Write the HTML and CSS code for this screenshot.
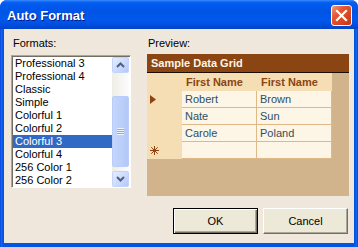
FILE: index.html
```html
<!DOCTYPE html>
<html lang="en">

<head>
    <meta charset="UTF-8">
    <title>Auto Format</title>
    <link rel="stylesheet" href="styles.css">
</head>

<body>
    <div class="window">
        <div class="titlebar">
            <span class="title">Auto Format</span>
            <span class="close-btn">
                <svg width="13" height="13" viewBox="0 0 13 13">
                    <path d="M2 2 L11 11 M11 2 L2 11" stroke="#fff" stroke-width="2.2" stroke-linecap="square" />
                </svg>
            </span>
        </div>

        <div class="client">
            <div class="panes">
                <div class="formats">
                    <div class="label">Formats:</div>
                    <div class="listbox">
                        <ul class="items">
                            <li>Professional 3</li>
                            <li>Professional 4</li>
                            <li>Classic</li>
                            <li>Simple</li>
                            <li>Colorful 1</li>
                            <li>Colorful 2</li>
                            <li class="selected">Colorful 3</li>
                            <li>Colorful 4</li>
                            <li>256 Color 1</li>
                            <li>256 Color 2</li>
                        </ul>
                        <div class="scrollbar">
                            <div class="sb-btn">
                                <svg width="9" height="6" viewBox="0 0 9 6"><path d="M1 5 L4.5 1.5 L8 5" fill="none" stroke="#4d6185" stroke-width="2" /></svg>
                            </div>
                            <div class="sb-track">
                                <div class="sb-thumb">
                                    <span class="grip"></span>
                                </div>
                            </div>
                            <div class="sb-btn">
                                <svg width="9" height="6" viewBox="0 0 9 6"><path d="M1 1 L4.5 4.5 L8 1" fill="none" stroke="#4d6185" stroke-width="2" /></svg>
                            </div>
                        </div>
                    </div>
                </div>

                <div class="preview">
                    <div class="label">Preview:</div>
                    <div class="datagrid">
                        <div class="caption">Sample Data Grid</div>
                        <div class="grid">
                            <div class="row-head"></div>
                            <div class="col-head">First Name</div>
                            <div class="col-head">First Name</div>

                            <div class="row-head">
                                <svg width="6" height="9" viewBox="0 0 6 9"><path d="M0 0 L6 4.5 L0 9 Z" fill="#8b4513" /></svg>
                            </div>
                            <div class="cell">Robert</div>
                            <div class="cell">Brown</div>

                            <div class="row-head"></div>
                            <div class="cell">Nate</div>
                            <div class="cell">Sun</div>

                            <div class="row-head"></div>
                            <div class="cell">Carole</div>
                            <div class="cell">Poland</div>

                            <div class="row-head">
                                <svg width="9" height="9" viewBox="0 0 9 9">
                                    <path d="M4.5 0 V9 M0 4.5 H9 M1.3 1.3 L7.7 7.7 M7.7 1.3 L1.3 7.7" stroke="#8b4513" stroke-width="1" />
                                </svg>
                            </div>
                            <div class="cell"></div>
                            <div class="cell"></div>
                        </div>
                    </div>
                </div>
            </div>

            <div class="buttons">
                <button class="btn default">OK</button>
                <button class="btn">Cancel</button>
            </div>
        </div>
    </div>
</body>

</html>
```

FILE: styles.css
```css
body {
    margin: 0;
    font-family: 'Liberation Sans', Arial, sans-serif;
    font-size: 11px;
    color: #000;
}

.window {
    width: 358px;
    height: 247px;
    box-sizing: border-box;
    display: flex;
    flex-direction: column;
    background: linear-gradient(to right, #0831d9 0, #166aee 1px, #0055e5 3px, #0055e5 355px, #166aee 357px, #0831d9 358px);
    border-radius: 7px 7px 0 0;
    overflow: hidden;
}

.titlebar {
    height: 29px;
    flex: none;
    display: flex;
    align-items: center;
    justify-content: space-between;
    padding: 0 6px 0 7px;
    background: linear-gradient(to bottom, #3c8cff 0, #0a62f0 2px, #0058ee 5px, #0055e5 12px, #0058ee 20px, #004bd8 26px, #0043c8 29px);
}

.title {
    color: #fff;
    font-weight: bold;
    font-size: 13px;
    text-shadow: 1px 1px #0a1883;
    margin-top: 1px;
}

.close-btn {
    width: 21px;
    height: 21px;
    box-sizing: border-box;
    border: 1px solid #fff;
    border-radius: 3px;
    background: linear-gradient(135deg, #f39a7c 0, #e5562f 35%, #d2401c 80%, #c03510 100%);
    display: flex;
    align-items: center;
    justify-content: center;
    margin-top: 1px;
}

.client {
    flex: 1;
    margin: 0 4px 4px;
    padding: 8px 5px 9px 7px;
    display: flex;
    flex-direction: column;
    background: repeating-conic-gradient(#f0e8dc 0 25%, #e9ebd7 0 50%) 0 0 / 2px 2px;
}

.panes {
    display: flex;
    gap: 16px;
}

.label {
    height: 13px;
    line-height: 13px;
}

.formats .label {
    margin-left: 2px;
    margin-bottom: 5px;
}

.preview .label {
    margin-left: 1px;
    margin-bottom: 4px;
}

.listbox {
    width: 120px;
    height: 133px;
    box-sizing: border-box;
    display: flex;
    border: 1px solid;
    border-color: #aca899 #fff #fff #aca899;
    box-shadow: inset 1px 1px #716f64;
    padding: 1px 0 0 1px;
    background: #fff;
    overflow: hidden;
}

.items {
    list-style: none;
    margin: 0;
    padding: 0;
    width: 99px;
}

.items li {
    height: 13px;
    line-height: 13px;
    padding-left: 2px;
    white-space: nowrap;
}

.items li.selected {
    background: #316ac5;
    color: #fff;
}

.scrollbar {
    width: 17px;
    display: flex;
    flex-direction: column;
    background: #f4f3ee;
}

.sb-btn {
    height: 16px;
    flex: none;
    box-sizing: border-box;
    border: 1px solid #c3d3fd;
    border-radius: 2px;
    background: linear-gradient(135deg, #e6eefc 0, #c9d8fc 60%, #b4c8f6 100%);
    display: flex;
    align-items: center;
    justify-content: center;
}

.sb-track {
    flex: 1;
    padding: 23px 0 3px;
    display: flex;
    flex-direction: column;
    background: linear-gradient(to right, #eeede5, #fcfcfe);
}

.sb-thumb {
    height: 71px;
    box-sizing: border-box;
    border: 1px solid #b8cdf9;
    border-radius: 2px;
    background: linear-gradient(to right, #c6d6fc 0, #bcd0fa 50%, #b3c8f6 100%);
    display: flex;
    align-items: center;
    justify-content: center;
}

.grip {
    width: 7px;
    height: 7px;
    background: repeating-linear-gradient(to bottom, #eef4fe 0 1px, #8caaea 1px 2px);
}

.preview {
    width: 202px;
    flex: none;
}

.datagrid {
    height: 142px;
    background: #d2b48c;
}

.caption {
    height: 18px;
    line-height: 18px;
    padding-left: 4px;
    background: #8b4513;
    color: #fdf5e6;
    font-weight: bold;
    border-bottom: 1px solid #1a0d04;
}

.grid {
    display: grid;
    grid-template-columns: 35px 75px 75px;
    grid-template-rows: 18px repeat(4, 17px);
}

.row-head {
    background: #f5deb3;
    display: flex;
    align-items: center;
    padding-left: 3px;
}

.col-head {
    background: #f5deb3;
    color: #8b4513;
    font-weight: bold;
    line-height: 18px;
    padding-left: 4px;
}

.cell {
    background: #fdf5e6;
    color: #2f4f5f;
    line-height: 16px;
    padding-left: 3px;
    border-right: 1px solid #deb887;
    border-bottom: 1px solid #deb887;
}

.buttons {
    margin-top: auto;
    margin-right: 1px;
    display: flex;
    justify-content: flex-end;
    gap: 5px;
}

.btn {
    width: 85px;
    height: 26px;
    box-sizing: border-box;
    font-family: 'Liberation Sans', Arial, sans-serif;
    font-size: 11px;
    color: #000;
    background: #ece9d8;
    border: 1px solid;
    border-color: #fff #716f64 #716f64 #fff;
    box-shadow: inset -1px -1px #aca899;
    padding: 0;
}

.btn.default {
    border: 1px solid #000;
    box-shadow: inset 1px 1px #fff, inset -1px -1px #716f64, inset -2px -2px #aca899;
}
```
